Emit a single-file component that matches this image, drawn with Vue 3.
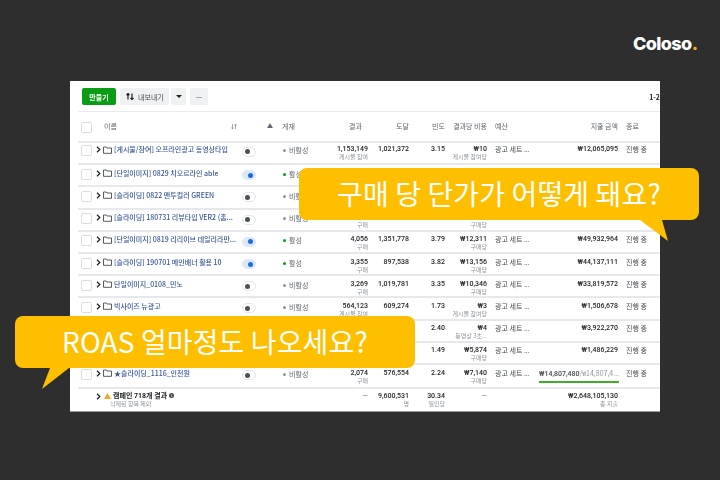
<template>
  <div class="page">
    <div class="logo">Coloso<span class="logo-dot">.</span></div>

    <div class="panel">
      <div class="toolbar">
        <button class="btn-create">만들기</button>
        <button class="btn-gray btn-export">
          <svg width="8" height="7" viewBox="0 0 8 7"><path d="M2 0.5v6M0.5 2L2 0.5 3.5 2M6 6.5v-6M4.5 5L6 6.5 7.5 5" fill="none" stroke="#1c1e21" stroke-width="1.2"/></svg>
          내보내기
        </button>
        <button class="btn-gray btn-caret"><span class="caret"></span></button>
        <button class="btn-gray btn-more">...</button>
        <span class="paging">1-2</span>
      </div>

      <div class="row head">
        <span class="check"></span>
        <span class="head-name">이름
          <svg width="6" height="5" viewBox="0 0 6 5"><path d="M1.5 0v5M4.5 0v5M0.5 3.5l1 1.5 1-1.5M3.5 1.5l1-1.5 1 1.5" fill="none" stroke="#8d949e" stroke-width="0.8"/></svg>
        </span>
        <span></span>
        <svg class="head-warn" width="6" height="5" viewBox="0 0 7 6"><path d="M3.5 0L7 6H0z" fill="#606770"/></svg>
        <span>게재</span>
        <span class="num head-result">결과</span>
        <span class="num">도달</span>
        <span class="num">빈도</span>
        <span class="num">결과당 비용</span>
        <span class="budget">예산</span>
        <span class="num">지출 금액</span>
        <span class="end">종료</span>
      </div>

      <div v-for="(r, i) in rows" :key="i" class="row" :class="{ first: i === 0, tall: r.progress }">
        <span class="check"></span>
        <div class="name">
          <svg class="chev" width="5" height="7" viewBox="0 0 5 7"><path d="M1 0.8L3.8 3.5 1 6.2" fill="none" stroke="#1c1e21" stroke-width="1.2"/></svg>
          <svg class="folder" width="9" height="8" viewBox="0 0 9 8"><path d="M0.5 7.3V1h2.8l0.8 1h4.4v5.3z" fill="none" stroke="#444950" stroke-width="0.9"/></svg>
          <span class="name-text">{{ r.name }}</span>
        </div>
        <div class="toggle" :class="{ on: r.on }"><i></i></div>
        <span></span>
        <div v-if="r.name" class="state" :class="{ on: r.on }"><i></i>{{ r.on ? '활성' : '비활성' }}</div>
        <span v-else></span>
        <div class="num"><b>{{ r.result }}</b><small>{{ r.resultSub }}</small></div>
        <div class="num"><b>{{ r.reach }}</b></div>
        <div class="num"><b>{{ r.freq }}</b></div>
        <div class="num"><b>{{ r.cost }}</b><small>{{ r.costSub }}</small></div>
        <div class="budget">{{ r.covered ? '' : '광고 세트 ...' }}</div>
        <div v-if="r.progress" class="spend-progress">
          <div class="spend-text"><b>₩14,807,480</b>/₩14,807,4...</div>
          <div class="spend-bar"></div>
        </div>
        <div v-else class="num"><b>{{ r.spend }}</b></div>
        <div class="end">{{ r.covered ? '' : '진행 중' }}</div>
      </div>

      <div class="row total">
        <span></span>
        <div class="name">
          <svg class="chev" width="5" height="7" viewBox="0 0 5 7"><path d="M1 0.8L3.8 3.5 1 6.2" fill="none" stroke="#1c1e21" stroke-width="1.2"/></svg>
          <div class="total-text">
            <div class="total-title">
              <svg width="7" height="6" viewBox="0 0 7 6"><path d="M3.5 0L7 6H0z" fill="#f5a623"/></svg>
              캠페인 718개 결과
              <span class="info">i</span>
            </div>
            <small>삭제된 항목 제외</small>
          </div>
        </div>
        <span></span>
        <span></span>
        <span></span>
        <div class="num"><b class="dash">—</b></div>
        <div class="num"><b>9,600,531</b><small>명</small></div>
        <div class="num"><b>30.34</b><small>일인당</small></div>
        <div class="num"><b class="dash">—</b></div>
        <span></span>
        <div class="num"><b>₩2,648,105,130</b><small>총 지출</small></div>
        <span></span>
      </div>
    </div>

    <div class="bubble bubble-top">
      구매 당 단가가 어떻게 돼요?
      <svg class="tail tail-right" width="30" height="22" viewBox="0 0 30 22"><path d="M0 0L28 21 22 0z" fill="#fdbf00"/></svg>
    </div>
    <div class="bubble bubble-bottom">
      ROAS 얼마정도 나오세요?
      <svg class="tail tail-left" width="30" height="22" viewBox="0 0 30 22"><path d="M8 0L0 21 27 0z" fill="#fdbf00"/></svg>
    </div>
  </div>
</template>

<script setup>
// rows 2-4 and 9-10 sit mostly under the speech bubbles
const rows = [
  { name: '[게시물/참여] 오프라인광고 동영상타입', result: '1,153,149', resultSub: '게시물 참여', reach: '1,021,372', freq: '3.15', cost: '₩10', costSub: '게시물 참여당', spend: '₩12,065,095' },
  { name: '[단일이미지] 0829 치오르라인 able', on: true, covered: true },
  { name: '[슬라이딩] 0822 맨투컬러 GREEN', covered: true },
  { name: '[슬라이딩] 180731 리뷰타입 VER2 (홈...', resultSub: '구매', costSub: '구매당', covered: true },
  { name: '[단일이미지] 0819 리리이브 데일리라만...', on: true, result: '4,056', resultSub: '구매', reach: '1,351,778', freq: '3.79', cost: '₩12,311', costSub: '구매당', spend: '₩49,932,964' },
  { name: '[슬라이딩] 190701 메인배너 활용 10', on: true, result: '3,355', resultSub: '구매', reach: '897,538', freq: '3.82', cost: '₩13,156', costSub: '구매당', spend: '₩44,137,111' },
  { name: '단일이미지_0108_민노', result: '3,269', resultSub: '구매', reach: '1,019,781', freq: '3.35', cost: '₩10,346', costSub: '구매당', spend: '₩33,819,572' },
  { name: '빅사이즈 뉴광고', result: '564,123', resultSub: '게시물 참여', reach: '609,274', freq: '1.73', cost: '₩3', costSub: '게시물 참여당', spend: '₩1,506,678' },
  { name: '', freq: '2.40', cost: '₩4', costSub: '동영상 3초...', spend: '₩3,922,270' },
  { name: '', freq: '1.49', cost: '₩5,874', costSub: '구매당', spend: '₩1,486,229' },
  { name: '★슬라이딩_1116_인천원', result: '2,074', resultSub: '구매', reach: '576,554', freq: '2.24', cost: '₩7,140', costSub: '구매당', progress: true }
]
</script>

<style>
html, body {
  margin: 0;
  background: #2e2e2e;
}
</style>

<style scoped>
.page {
  position: relative;
  width: 720px;
  height: 480px;
  padding: 81px 0 0 70px;
  box-sizing: border-box;
  overflow: hidden;
  background: #2e2e2e;
  font-family: "Noto Sans CJK KR", "Noto Sans", sans-serif;
}

.logo {
  position: absolute;
  top: 32px;
  left: 633px;
  font-family: Inter, "Noto Sans", sans-serif;
  font-size: 18px;
  font-weight: 800;
  letter-spacing: -0.6px;
  line-height: 24px;
  color: #fff;
}

.logo-dot {
  color: #f5a623;
}

.panel {
  width: 590px;
  height: 331px;
  box-sizing: border-box;
  padding-left: 8px;
  overflow: hidden;
  background: #fff;
  border-bottom: 1px solid #999;
  filter: blur(0.45px);
  font-size: 7px;
  line-height: 8px;
  color: #444950;
}

.toolbar {
  display: flex;
  align-items: center;
  gap: 3px;
  height: 31px;
  padding: 1px 0 0 4px;
  box-sizing: border-box;
  border-bottom: 1px solid #e9eaed;
}

.toolbar button {
  height: 17px;
  padding: 0;
  border: 0;
  border-radius: 2px;
  font: inherit;
  color: #444950;
}

.btn-create {
  width: 34px;
  margin-right: 1px;
  background: #0a9c14;
  color: #fff !important;
  font-weight: 700 !important;
}

.btn-gray {
  background: #f0f1f3;
}

.btn-export {
  display: flex;
  align-items: center;
  gap: 4px;
  width: 49px;
  padding-left: 6px !important;
  margin-right: -1px;
  box-sizing: border-box;
}

.btn-caret {
  display: flex;
  align-items: center;
  justify-content: center;
  width: 15px;
}

.caret {
  border: 3px solid transparent;
  border-top: 3px solid #1c1e21;
  border-bottom: 0;
}

.btn-more {
  width: 18px;
  margin-left: 1px;
  font-family: Roboto, sans-serif !important;
  font-weight: 700 !important;
  line-height: 13px !important;
}

.paging {
  margin-left: auto;
  font-weight: 700;
  color: #1c1e21;
  white-space: nowrap;
}

.row {
  display: grid;
  grid-template-columns: 18px 142px 30px 14px 43px 43px 41px 36px 42px 48px 83px 42px;
  height: 22.2px;
  padding-top: 3.5px;
  box-sizing: border-box;
  border-bottom: 2px solid #e6e8eb;
}

.row.head {
  height: 31px;
  padding-top: 10px;
  color: #606770;
}

.row.first {
  height: 22.3px;
  padding-top: 2px;
}

.row.tall {
  height: 23.7px;
  padding-top: 4px;
}

.row.total {
  height: 23px;
  padding-top: 3px;
  border-bottom: 0;
}

.check {
  width: 9px;
  height: 9px;
  margin: 0 0 0 3px;
  border: 1px solid #dadde1;
  border-radius: 2px;
  background: #fff;
}

.head-name {
  display: flex;
  align-items: flex-start;
  justify-content: space-between;
  padding: 0 1px 0 8px;
}

.head-name svg {
  margin-top: 2px;
}

.head-warn {
  margin: 1px 0 0 -1.5px;
}

.head-result {
  padding-right: 6px;
}

.num {
  text-align: right;
  white-space: nowrap;
}

.num b {
  display: block;
  font-family: Roboto, "Noto Sans CJK KR", sans-serif;
  font-weight: 500;
  color: #1c1e21;
  min-height: 8px;
}

small {
  display: block;
  font-size: 6px;
  color: #8d949e;
}

.budget {
  padding-left: 8px;
  white-space: nowrap;
}

.end {
  padding-left: 8px;
  white-space: nowrap;
}

.name {
  display: flex;
  align-items: flex-start;
  min-width: 0;
}

.chev {
  flex: none;
  margin: 1px 2px 0 0;
}

.folder {
  flex: none;
  margin: 0.5px 2px 0 0;
}

.name-text {
  color: #385898;
  white-space: nowrap;
  font-weight: 500;
}

.toggle {
  display: flex;
  align-items: center;
  justify-content: center;
  width: 14px;
  height: 10px;
  margin: 1.5px 0 0 4px;
  box-sizing: border-box;
  border: 1px solid #e4e6eb;
  border-radius: 5px;
  background: #fff;
}

.toggle i {
  width: 5px;
  height: 5px;
  border-radius: 50%;
  background: #4b4f56;
  transform: translateX(-2px);
}

.toggle.on {
  background: #dbe9fb;
  border-color: #dbe9fb;
}

.toggle.on i {
  background: #1a6ee0;
  transform: translateX(1px);
}

.state {
  display: flex;
  align-items: flex-start;
  gap: 3px;
  margin: 1px 0 0 1px;
  white-space: nowrap;
  color: #606770;
}

.state i {
  width: 3px;
  height: 3px;
  margin-top: 3px;
  border-radius: 50%;
  background: #8d949e;
}

.state.on i {
  background: #0a9c14;
}

.spend-progress {
  margin-left: 4px;
  margin-right: -1px;
  white-space: nowrap;
  overflow: hidden;
  color: #8d949e;
}

.spend-text b {
  font-family: Roboto, "Noto Sans CJK KR", sans-serif;
  font-weight: 500;
  color: #444950;
}

.spend-bar {
  height: 2px;
  margin-top: 3px;
  background: #3fae2a;
}

.total-text small {
  margin-left: 7px;
}

.total-title {
  display: flex;
  align-items: center;
  gap: 2px;
  margin-left: 1px;
  font-family: Roboto, "Noto Sans CJK KR", sans-serif;
  font-weight: 700;
  color: #1c1e21;
}

.info {
  display: inline-block;
  width: 5px;
  height: 5px;
  border-radius: 50%;
  background: #444950;
  color: #fff;
  font-size: 4px;
  line-height: 5px;
  text-align: center;
}

.dash {
  color: #8d949e !important;
}

.bubble {
  position: absolute;
  width: 400px;
  height: 52px;
  border-radius: 8px;
  background: #fdbf00;
  color: #fff;
  font-size: 28px;
  letter-spacing: 0.13px;
  line-height: 50px;
  white-space: nowrap;
  box-sizing: border-box;
}

.bubble-top {
  top: 168px;
  left: 299px;
  padding-left: 38px;
}

.bubble-bottom {
  top: 316px;
  left: 15px;
  padding-left: 47px;
}

.tail {
  position: absolute;
  top: 52px;
}

.tail-right {
  left: 341px;
}

.tail-left {
  left: 27px;
}
</style>
